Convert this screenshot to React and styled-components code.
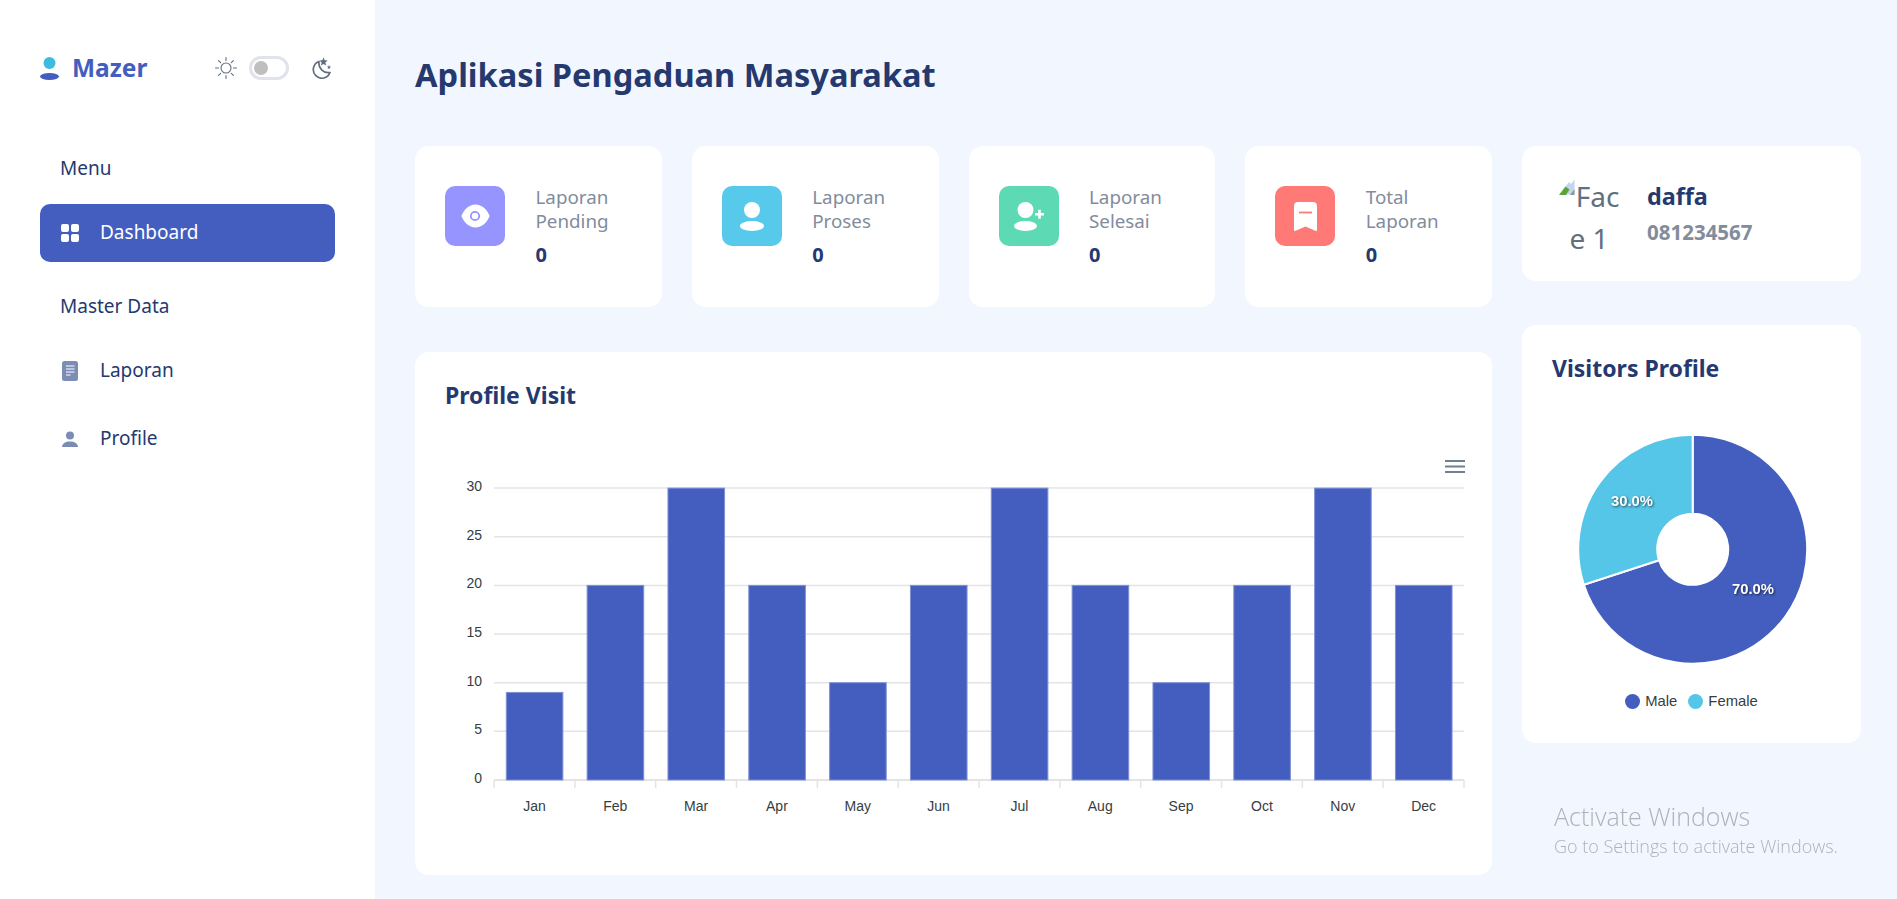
import React from 'react';
import styled, { createGlobalStyle } from 'styled-components';

const FONT = '"Noto Sans", "Open Sans", sans-serif';
const CHART_FONT = '"Liberation Sans", Arial, sans-serif';

const GlobalStyle = createGlobalStyle`
  html, body {
    margin: 0;
    height: 100%;
    overflow: hidden;
    background: #f2f7ff;
    font-family: ${FONT};
    color: #607080;
  }
  * { box-sizing: border-box; }
`;

const Page = styled.div`
  display: flex;
  height: 100vh;
`;

/* sidebar */
const Sidebar = styled.aside`
  flex: 0 0 375px;
  background: #fff;
  padding: 56px 40px 0;
`;
const SideHeader = styled.div`
  display: flex;
  align-items: center;
  height: 24px;
  margin-bottom: 76px;
`;
const Brand = styled.div`
  display: flex;
  align-items: center;
  gap: 13px;
  font-size: 24.5px;
  font-weight: 700;
  color: #435ebe;
  margin-right: auto;
`;
const BrandName = styled.span`
  margin-bottom: 2px;
`;
const ThemeSwitch = styled.div`
  display: flex;
  align-items: center;
  margin-right: 3px;
`;
const Toggle = styled.div`
  display: flex;
  align-items: center;
  width: 40px;
  height: 24px;
  margin: 0 22px 0 11px;
  padding-left: 2px;
  border: 3px solid #e0e3ec;
  border-radius: 12px;
  background: #fff;
`;
const Knob = styled.span`
  width: 14px;
  height: 14px;
  border-radius: 50%;
  background: #bfbfbf;
`;
const SideTitle = styled.div`
  padding-left: 20px;
  font-size: 19px;
  line-height: 24px;
  font-weight: 400;
  color: #25396f;
  margin-bottom: ${({ $gap }) => $gap}px;
`;
const SideItem = styled.div`
  display: flex;
  align-items: center;
  height: 58px;
  padding-left: 21px;
  border-radius: 10px;
  font-size: 19px;
  font-weight: 400;
  color: ${({ $active }) => ($active ? '#fff' : '#25396f')};
  background: ${({ $active }) => ($active ? '#435ebe' : 'transparent')};
  margin-bottom: ${({ $gap }) => $gap}px;
`;
const SideIcon = styled.span`
  display: flex;
  justify-content: center;
  width: 18px;
  margin-right: 21px;
`;
const SideLabel = styled.span`
  margin-bottom: 2px;
`;

/* main */
const Main = styled.main`
  flex: 1;
  padding: 55px 36px 0 40px;
`;
const Heading = styled.h1`
  margin: 0 0 51px;
  font-size: 32.6px;
  line-height: 40px;
  font-weight: 700;
  color: #25396f;
`;
const Columns = styled.div`
  display: grid;
  grid-template-columns: 1077px 339px;
  column-gap: 30px;
`;
const Stack = styled.div`
  display: flex;
  flex-direction: column;
`;
const Card = styled.section`
  background: #fff;
  border-radius: 14px;
`;
const StatRow = styled.div`
  display: grid;
  grid-template-columns: repeat(4, 1fr);
  column-gap: 30px;
  margin-bottom: 45px;
`;
const StatCard = styled(Card)`
  display: flex;
  height: 161px;
  padding: 40px 0 0 30px;
`;
const StatIcon = styled.div`
  display: flex;
  align-items: center;
  justify-content: center;
  flex: 0 0 60px;
  height: 60px;
  margin-right: 30.500px;
  border-radius: 10px;
  background: ${({ $color }) => $color};
`;
const StatLabel = styled.div`
  font-size: 18.800px;
  line-height: 24px;
  font-weight: 400;
  color: #828c9c;
  margin: -1px 0 10px;
`;
const StatValue = styled.div`
  font-size: 20px;
  line-height: 24px;
  font-weight: 700;
  color: #25396f;
`;
const ChartCard = styled(Card)`
  height: 523px;
`;
const CardTitle = styled.h2`
  margin: 0;
  padding: ${({ $top }) => $top}px 30px 0;
  height: ${({ $height }) => $height}px;
  font-size: 23px;
  line-height: 30px;
  font-weight: 700;
  color: #25396f;
`;
const ChartSvg = styled.svg`
  display: block;
`;
const AxisText = styled.text`
  font-family: ${CHART_FONT};
  font-size: 14px;
  fill: #373d3f;
`;
const SliceText = styled.text`
  font-family: ${CHART_FONT};
  font-size: 14.8px;
  font-weight: 700;
  fill: #fff;
  filter: drop-shadow(1px 1px 1px rgba(0, 0, 0, 0.6));
`;

/* right column */
const UserCard = styled(Card)`
  display: flex;
  height: 135px;
  margin-bottom: 44px;
  padding: 29px 0 0 34px;
`;
const BrokenAvatar = styled.div`
  flex: 0 0 66px;
  margin-right: 25px;
  font-size: 28px;
  line-height: 42px;
  text-align: center;
  color: #607080;
  svg { vertical-align: 12px; margin-right: 1px; }
`;
const UserName = styled.div`
  font-size: 23.400px;
  line-height: 30px;
  font-weight: 700;
  color: #25396f;
  margin: 6px 0 9px;
`;
const UserPhone = styled.div`
  font-size: 20.500px;
  line-height: 24px;
  font-weight: 700;
  color: #828c9c;
`;
const VisitorCard = styled(Card)`
  height: 418px;
`;
const Legend = styled.div`
  display: flex;
  justify-content: center;
  gap: 11px;
  margin-top: 10px;
  font-family: ${CHART_FONT};
  font-size: 14.8px;
  line-height: 22px;
  color: #373d3f;
`;
const LegendItem = styled.span`
  display: flex;
  align-items: center;
  gap: 5px;
`;
const LegendDot = styled.i`
  width: 15px;
  height: 15px;
  border-radius: 50%;
  background: ${({ $color }) => $color};
`;
const Watermark = styled.div`
  position: fixed;
  left: 1554px;
  top: 799px;
  font-family: "Open Sans", sans-serif;
  font-weight: 300;
  color: #aeb2b9;
  pointer-events: none;
`;
const WatermarkTitle = styled.div`
  font-size: 25px;
  line-height: 34px;
`;
const WatermarkText = styled.div`
  font-size: 18px;
  line-height: 26px;
`;

/* icons */
const LogoIcon = () => (
  <svg width="19" height="23" viewBox="0 0 19 23">
    <circle cx="9.5" cy="6" r="6" fill="#3fbbe0" />
    <ellipse cx="9.5" cy="19.5" rx="9.5" ry="3.5" fill="#435ebe" />
  </svg>
);
const SunIcon = () => (
  <svg width="24" height="24" viewBox="0 0 24 24" fill="none" stroke="#5f6e80" strokeWidth="1.1" strokeLinecap="round">
    <circle cx="12" cy="12" r="5" />
    <path d="M12 1.5v3M12 19.5v3M1.5 12h3M19.5 12h3M4.6 4.6l2.1 2.1M17.3 17.3l2.1 2.1M4.6 19.4l2.1-2.1M17.3 6.7l2.1-2.1" />
  </svg>
);
const MoonIcon = () => (
  <svg width="21" height="22" viewBox="0 0 21 22">
    <path d="M8 4.5A8.6 8.6 0 1 0 19 15.5A9.5 9.5 0 0 1 8 4.5Z" fill="none" stroke="#5f6e80" strokeWidth="1.7" strokeLinejoin="round" />
    <path d="M12.5 0.5l1.2 2.8 3 .3-2.3 2 .7 3-2.6-1.6-2.6 1.6.7-3-2.3-2 3-.3z" fill="#5f6e80" />
    <path d="M18 8l.6 1.4 1.5.1-1.2 1 .4 1.5-1.3-.8-1.3.8.4-1.5-1.2-1 1.5-.1z" fill="#5f6e80" />
  </svg>
);
const GridIcon = () => (
  <svg width="18" height="18" viewBox="0 0 18 18" fill="#fff">
    <rect width="8" height="8" rx="2" />
    <rect x="10" width="8" height="8" rx="2" />
    <rect y="10" width="8" height="8" rx="2" />
    <rect x="10" y="10" width="8" height="8" rx="2" />
  </svg>
);
const DocIcon = () => (
  <svg width="16" height="20" viewBox="0 0 16 20">
    <rect width="16" height="20" rx="2.5" fill="#7c8db5" />
    <path d="M4 5h8.500M4 8h8.500M4 11h8.500M4 14h4.500" stroke="#fff" strokeWidth="1.200" />
  </svg>
);
const PersonIcon = () => (
  <svg width="16" height="16" viewBox="0 0 16 16" fill="#7c8db5">
    <circle cx="8" cy="4.500" r="4" />
    <path d="M0 16c0-3.500 3.500-5.500 8-5.500s8 2 8 5.500z" />
  </svg>
);
const EyeIcon = () => (
  <svg width="29" height="24" viewBox="0 0 29 24">
    <path d="M14.500 0.500C8 0.500 3 5.500 0.300 12 3 18.500 8 23.500 14.500 23.500S26 18.500 28.700 12C26 5.500 21 0.500 14.500 0.500Z" fill="#fff" />
    <circle cx="14" cy="12" r="4.200" fill="#fff" stroke="#9694ff" strokeWidth="1.800" />
  </svg>
);
const ProfileIcon = () => (
  <svg width="24" height="29" viewBox="0 0 24 29" fill="#fff">
    <circle cx="12" cy="8" r="8" />
    <ellipse cx="12" cy="24" rx="12" ry="5" />
  </svg>
);
const AddUserIcon = () => (
  <svg width="30" height="29" viewBox="0 0 30 29" fill="#fff">
    <circle cx="11.500" cy="8" r="8" />
    <ellipse cx="11.500" cy="24" rx="11.500" ry="5" />
    <path d="M21 11h3.200V7.800h2.600V11H30v2.600h-3.200v3.200h-2.600v-3.200H21z" />
  </svg>
);
const BookmarkIcon = () => (
  <svg width="23" height="29" viewBox="0 0 23 29">
    <path d="M4 0h15a4 4 0 0 1 4 4v24c0 .8-.8 1.200-1.700.8L11.500 24.500 1.700 28.800C.8 29.200 0 28.800 0 28V4a4 4 0 0 1 4-4z" fill="#fff" />
    <path d="M5 10.500h13" stroke="#ff7976" strokeWidth="1.800" />
  </svg>
);
const BrokenImageIcon = () => (
  <svg width="16" height="16" viewBox="0 0 16 16">
    <path d="M0.500 15.500L10 3l2 2 3.500-4.500v15z" fill="#c6d4ee" />
    <path d="M0 16l6.500-8.500 4 3L7 16z" fill="#5aa53a" />
    <path d="M11 16l4.500-6V16z" fill="#8a9a9a" />
  </svg>
);

const months = ['Jan', 'Feb', 'Mar', 'Apr', 'May', 'Jun', 'Jul', 'Aug', 'Sep', 'Oct', 'Nov', 'Dec'];
const values = [9, 20, 30, 20, 10, 20, 30, 20, 10, 20, 30, 20];
const stats = [
  { label: ['Laporan', 'Pending'], color: '#9694ff', icon: <EyeIcon /> },
  { label: ['Laporan', 'Proses'], color: '#57caeb', icon: <ProfileIcon /> },
  { label: ['Laporan', 'Selesai'], color: '#5ddab4', icon: <AddUserIcon /> },
  { label: ['Total', 'Laporan'], color: '#ff7976', icon: <BookmarkIcon /> },
];

const ZERO_Y = 780;
const STEP_Y = 9.73;
const LEFT_X = 494;
const RIGHT_X = 1464;
const CAT_W = (RIGHT_X - LEFT_X) / 12;

const BarChart = () => (
  <ChartSvg width="1077" height="400" viewBox="415 440 1077 400">
    {[0, 5, 10, 15, 20, 25, 30].map((v) => (
      <g key={v}>
        <line x1={LEFT_X} x2={RIGHT_X} y1={ZERO_Y - v * STEP_Y} y2={ZERO_Y - v * STEP_Y} stroke="#e4e4e7" strokeWidth={v === 0 ? 2 : 1.5} />
        <AxisText x="482" y={ZERO_Y - v * STEP_Y + 3} textAnchor="end">{v}</AxisText>
      </g>
    ))}
    {months.map((m, i) => {
      const h = values[i] * STEP_Y;
      return (
        <g key={m}>
          <rect x={LEFT_X + i * CAT_W + 12.300} y={ZERO_Y - h} width={CAT_W * 0.7} height={h} fill="#435ebe" stroke="#7f91d5" strokeWidth="1" />
          <line x1={LEFT_X + i * CAT_W} x2={LEFT_X + i * CAT_W} y1={ZERO_Y} y2={ZERO_Y + 8} stroke="#e4e4e7" strokeWidth="1.500" />
          <AxisText x={LEFT_X + (i + 0.5) * CAT_W} y="811" textAnchor="middle">{m}</AxisText>
        </g>
      );
    })}
    <line x1={RIGHT_X} x2={RIGHT_X} y1={ZERO_Y} y2={ZERO_Y + 8} stroke="#e4e4e7" strokeWidth="1.500" />
    <path d="M1445 461h20M1445 466.500h20M1445 472h20" stroke="#6e8192" strokeWidth="2" />
  </ChartSvg>
);

const CX = 1692.700;
const CY = 549.300;
const polar = (r, deg) => {
  const a = ((deg - 90) * Math.PI) / 180;
  return `${CX + r * Math.cos(a)} ${CY + r * Math.sin(a)}`;
};
const slice = (from, to) => {
  const large = to - from > 180 ? 1 : 0;
  return `M${polar(114.500, from)}A114.500 114.500 0 ${large} 1 ${polar(114.500, to)}L${polar(35.500, to)}A35.500 35.500 0 ${large} 0 ${polar(35.500, from)}Z`;
};

const DonutChart = () => (
  <ChartSvg width="339" height="270" viewBox="1522 410 339 270">
    <path d={slice(0, 252)} fill="#435ebe" stroke="#fff" strokeWidth="2" />
    <path d={slice(252, 360)} fill="#55c6e8" stroke="#fff" strokeWidth="2" />
    <SliceText x="1632" y="506" textAnchor="middle">30.0%</SliceText>
    <SliceText x="1753" y="594" textAnchor="middle">70.0%</SliceText>
  </ChartSvg>
);

export default function App() {
  return (
    <Page>
      <GlobalStyle />
      <Sidebar>
        <SideHeader>
          <Brand><LogoIcon /><BrandName>Mazer</BrandName></Brand>
          <ThemeSwitch>
            <SunIcon />
            <Toggle><Knob /></Toggle>
            <MoonIcon />
          </ThemeSwitch>
        </SideHeader>
        <SideTitle $gap={24}>Menu</SideTitle>
        <SideItem $active $gap={32}><SideIcon><GridIcon /></SideIcon><SideLabel>Dashboard</SideLabel></SideItem>
        <SideTitle $gap={24}>Master Data</SideTitle>
        <SideItem $gap={10}><SideIcon><DocIcon /></SideIcon><SideLabel>Laporan</SideLabel></SideItem>
        <SideItem><SideIcon><PersonIcon /></SideIcon><SideLabel>Profile</SideLabel></SideItem>
      </Sidebar>

      <Main>
        <Heading>Aplikasi Pengaduan Masyarakat</Heading>
        <Columns>
          <Stack>
            <StatRow>
              {stats.map((s) => (
                <StatCard key={s.label.join()}>
                  <StatIcon $color={s.color}>{s.icon}</StatIcon>
                  <div>
                    <StatLabel>{s.label[0]}<br />{s.label[1]}</StatLabel>
                    <StatValue>0</StatValue>
                  </div>
                </StatCard>
              ))}
            </StatRow>
            <ChartCard>
              <CardTitle $top={28} $height={88}>Profile Visit</CardTitle>
              <BarChart />
            </ChartCard>
          </Stack>
          <Stack>
            <UserCard>
              <BrokenAvatar><BrokenImageIcon />Fac<br />e 1</BrokenAvatar>
              <div>
                <UserName>daffa</UserName>
                <UserPhone>081234567</UserPhone>
              </div>
            </UserCard>
            <VisitorCard>
              <CardTitle $top={28} $height={85}>Visitors Profile</CardTitle>
              <DonutChart />
              <Legend>
                <LegendItem><LegendDot $color="#435ebe" />Male</LegendItem>
                <LegendItem><LegendDot $color="#55c6e8" />Female</LegendItem>
              </Legend>
            </VisitorCard>
          </Stack>
        </Columns>
      </Main>
      <Watermark>
        <WatermarkTitle>Activate Windows</WatermarkTitle>
        <WatermarkText>Go to Settings to activate Windows.</WatermarkText>
      </Watermark>
    </Page>
  );
}
